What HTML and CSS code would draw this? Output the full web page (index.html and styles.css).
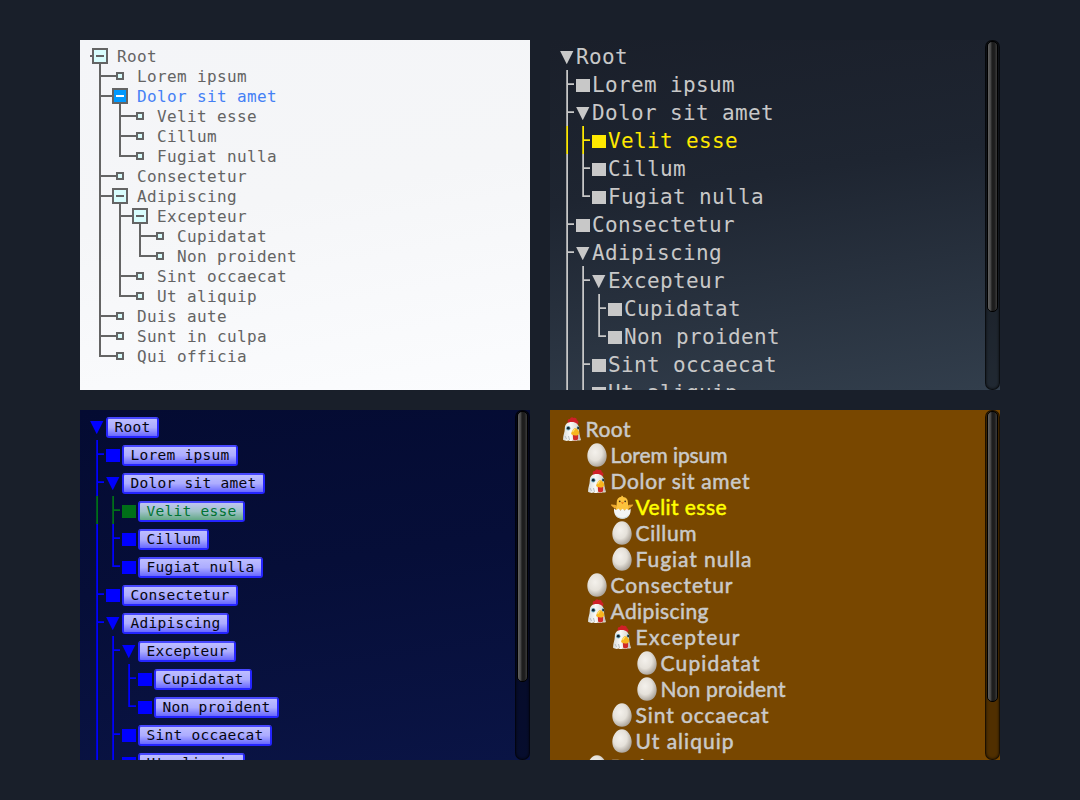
FILE: index.html
```html
<!DOCTYPE html>
<html lang="en">
<head>
<meta charset="utf-8">
<title>Tree themes</title>
<link rel="stylesheet" href="styles.css">
</head>
<body>
<svg class="defs" width="0" height="0" aria-hidden="true">
  <defs>
    <radialGradient id="shell" cx="0.4" cy="0.38" r="0.65">
      <stop offset="0" stop-color="#f4f1ec"/><stop offset="0.55" stop-color="#e5e1da"/><stop offset="1" stop-color="#aaa39a"/>
    </radialGradient>
    <linearGradient id="feather" x1="0" x2="1">
      <stop offset="0" stop-color="#d9dcda"/><stop offset="0.4" stop-color="#fafaf7"/><stop offset="1" stop-color="#cfccc4"/>
    </linearGradient>
    <symbol id="egg" viewBox="0 0 24 24">
      <path d="M12 .3C17.400.3 21.700 6.800 21.700 12.700c0 6.500-4 11-9.700 11s-9.700-4.500-9.700-11C2.300 6.800 6.600.3 12 .3z" fill="url(#shell)"/>
    </symbol>
    <symbol id="hen" viewBox="0 0 24 24">
      <path d="M8 6C7.200 3 8.300 1.400 10 2.200 10.200.2 12.400-.5 13.500 1c2-.7 3.700.6 3.200 2.300 1.700.1 2.100 1.700 1.300 3.700z" fill="#cf2027"/>
      <path d="M4.800 11.500C4.800 7 7.500 5 11.800 5s7.200 2.500 7.200 7c0 4 1 8 2 11-1.700 1-2.800.2-3.800.5-1.500.8-3 .4-4.500.3-1.500.5-3 .5-4-.3-1.800.7-3.700.4-5.500-.4-.6-3.600 1.600-7.300 1.600-11.600z" fill="url(#feather)"/>
      <path d="M5 19l1.500 3M8.500 19l1 4M19 18l.5 4" stroke="#b7bfc3" stroke-width="1" fill="none"/>
      <ellipse cx="8.300" cy="11.200" rx="2.200" ry="2.300" fill="#79b4c8"/><circle cx="8.300" cy="11.200" r="1.400" fill="#14232c"/>
      <ellipse cx="18" cy="11" rx="1.300" ry="2.100" fill="#79a9b8"/><circle cx="18.200" cy="11" r="1" fill="#14232c"/>
      <path d="M12.800 17.500h5.300v4.800c-1.400 1.500-3.800 1.500-5 .1z" fill="#cf2929"/>
      <path d="M14.500 11.300c2-.6 4.600 1.700 4.700 4.600-.5 2.500-3.200 2.900-5.200 2.300-1.800-.2-3.300-1-2.800-2 .6-1.600 1.700-4 3.300-4.900z" fill="#f7b51f"/>
      <path d="M12.700 15c.7-1.800 1.300-2.700 2.500-2.700" stroke="#ffe36e" stroke-width="1.200" fill="none"/>
    </symbol>
    <symbol id="chick" viewBox="0 0 24 24">
      <path d="M6.500 10.500C4.500 9.500 2.500 9.800.9 9.600c.2 1.800 1.700 2.200 2.300 2.400.3 1.300 1.700 1.600 3.600 1.700zM18 10.500c2-1 3.500-.700 5.200-.9-.3 1.800-1.500 2.200-2.200 2.500-.5 1.100-1.500 1.500-3.300 1.600z" fill="#eda92c"/>
      <path d="M11.500 1.800L11 .4l1.300.8.700-.8.100 1.500c3.200.3 5 2.500 4.800 5.500 0 2.700.8 4.300.8 7.600H6c0-3.300.8-4.900.7-7.600 0-3 1.700-5.200 4.800-5.600z" fill="#fcc33d"/>
      <circle cx="9.700" cy="6.300" r=".9" fill="#46301b"/><circle cx="15.200" cy="6.300" r=".9" fill="#46301b"/>
      <path d="M10.800 7.300h3.300l-1.600 2z" fill="#e87918"/>
      <path d="M4 13.500l2.300 1.600 2.100-1.500 2.100 2 2-1.800 2.200 1.800 2-1.900 2 1.500 1.900-1.700c.6 6.300-2.800 10.200-8.300 10.200S3.500 20 4 13.500z" fill="#f3f5f4"/>
      <path d="M5.200 18.500c1.500 3.500 5 4.500 8 4.200 2.500-.2 5-1.500 6.300-4.200-.9 3.600-3.500 5.200-7.200 5.200-3.500 0-6.200-1.800-7.100-5.200z" fill="#c6d7dc"/>
    </symbol>
  </defs>
</svg>
<main class="themes">
  <section class="panel light"><div class="tree" data-selected="2" data-rows="16"></div></section>
  <section class="panel slate"><div class="tree" data-selected="3" data-rows="13"></div><div class="scrollbar"><div class="thumb"></div></div></section>
  <section class="panel navy"><div class="tree" data-selected="3" data-rows="13"></div><div class="scrollbar"><div class="thumb"></div></div></section>
  <section class="panel farm"><div class="tree" data-selected="3" data-rows="14"></div><div class="scrollbar"><div class="thumb thumb-long"></div></div></section>
</main>
<script src="tree.js"></script>
</body>
</html>
```
FILE: styles.css
```css
* { box-sizing: border-box; }
body {
  margin: 0;
  background: #191f2a;
  font-family: "DejaVu Sans Mono", monospace;
}
.defs { position: absolute; }
.themes {
  display: grid;
  grid-template-columns: 450px 450px;
  grid-template-rows: 350px 350px;
  gap: 20px;
  padding: 40px 80px;
}
.panel { display: flex; overflow: hidden; }
.tree { flex: 1; overflow: hidden; }
.row { display: flex; white-space: pre; }
.cell { flex: none; }

/* light */
.light { background: linear-gradient(170deg, #f4f5f8 0%, #f5f6f8 45%, #fbfcfe 100%); color: #646464; }
.light .tree { padding: 6px 0 0 10px; font-size: 16px; letter-spacing: 0.37px; }
.light .row { height: 20px; line-height: 22px; }
.light .cell { width: 20px; height: 20px; background-repeat: no-repeat; --l: linear-gradient(#646464, #646464); }
.light .line { background-image: var(--l); background-size: 2px 20px; background-position: 9px 0; }
.light .tee { background-image: var(--l), var(--l); background-size: 2px 20px, 11px 2px; background-position: 9px 0, 9px 9px; }
.light .elbow { background-image: var(--l), var(--l); background-size: 2px 11px, 11px 2px; background-position: 9px 0, 9px 9px; }
.light .icon { display: grid; place-items: center; background-image: var(--l); background-size: 10px 2px; background-position: 0 9px; }
.light .open { background-image: var(--l), var(--l); background-size: 10px 2px, 2px 10px; background-position: 0 9px, 9px 10px; }
.light .mark { width: 8px; height: 8px; border: 2px solid #646464; background: #d8fdfd; }
.light .open .mark { width: 16px; height: 16px; display: grid; place-items: center; }
.light .open .mark::after { content: ""; width: 8px; height: 2px; background: #646464; }
.light .selected .label { color: #4480f5; }
.light .selected .mark { background: #0099ff; }
.light .selected .open .mark::after { background: #fff; }
.light .label { padding-left: 7px; }

/* slate and navy */
.slate { background: linear-gradient(172deg, #1a1f2a 0%, #1e2531 40%, #323e4c 100%); --ink: #c8c8c8; }
.navy { background: linear-gradient(172deg, #040b32 0%, #060e38 45%, #0a1445 100%); --ink: #0000ff; }
.slate .tree, .navy .tree { padding: 2px 0 0 10px; }
.slate .row, .navy .row { height: 28px; color: var(--ink); }
.slate .cell, .navy .cell {
  width: 16px;
  height: 28px;
  background-repeat: no-repeat;
  --soft: color-mix(in srgb, currentColor 75%, transparent);
  --v: linear-gradient(90deg, var(--soft) 50%, currentColor 50%);
  --h: linear-gradient(var(--soft) 50%, currentColor 50%);
}
.slate .line, .navy .line { background-image: var(--v); background-size: 2px 28px; background-position: 6px 0; }
.slate .tee, .navy .tee { background-image: var(--v), var(--h); background-size: 2px 28px, 6px 2px; background-position: 6px 0, 8px 13px; }
.slate .elbow, .navy .elbow { background-image: var(--v), var(--h); background-size: 2px 15px, 6px 2px; background-position: 6px 0, 8px 13px; }
.slate .mark, .navy .mark { width: 13.500px; height: 13.500px; margin: 8.700px 0 0; background: currentColor; }
.slate .open .mark, .navy .open .mark { clip-path: polygon(0 0, 100% 0, 50% 100%); }
.slate .label { font-size: 21px; letter-spacing: 0.360px; line-height: 30.500px; }
.slate .selected { color: #ffe900; }
.navy .selected { color: #006f18; }
.navy .label {
  height: 21px;
  margin: 4.500px 0 0 0.400px;
  padding: 0 6.500px 0 6px;
  border: 2px solid #2525ff;
  border-top-color: #4848ff;
  border-radius: 3px;
  background: linear-gradient(#bebeff 0%, #acacff 50%, #6868ff 100%);
  color: #050510;
  font-size: 14.500px;
  letter-spacing: 0.270px;
  line-height: 17px;
}
.navy .selected .label { color: #007333; background: linear-gradient(#bfc5f0 0%, #a0c2c8 50%, #62a884 100%); }

/* farm */
.farm { background: #784700; color: #cacaca; }
.farm .tree { padding: 6px 0 0 9px; }
.farm .row { height: 26px; }
.farm .cell { width: 25px; height: 26px; }
.farm .icon { display: grid; place-items: center; }
.farm .icon svg { width: 24px; height: 24px; }
.farm .label { height: 26px; overflow: visible; font: 400 21px/26px Lato, sans-serif; }
.farm .label text { fill: currentColor; stroke: currentColor; stroke-width: 0.5px; }
.farm .selected { color: #ffff00; }

/* scrollbar */
.scrollbar {
  flex: none;
  width: 15px;
  padding: 1px;
  border: 1px solid rgba(0, 0, 0, 0.650);
  border-radius: 7px;
  background: rgba(0, 0, 0, 0.330);
  box-shadow: inset 0 0 3px rgba(0, 0, 0, 0.700);
}
.thumb {
  height: 271px;
  margin: -1px 0 0;
  border: 1px solid #000;
  border-radius: 5px;
  background: linear-gradient(90deg, #626262 0%, #414141 35%, #1d1d1d 42%, #1d1d1d 70%, #3c3c3c 100%);
}
.thumb-long { height: 291px; }
```
FILE: tree.js
```js
// [depth, label, width of the label in the farm theme]
const nodes = [
  [0, "Root", 45],
  [1, "Lorem ipsum", 117],
  [1, "Dolor sit amet", 139],
  [2, "Velit esse", 91],
  [2, "Cillum", 61],
  [2, "Fugiat nulla", 116],
  [1, "Consectetur", 122],
  [1, "Adipiscing", 98],
  [2, "Excepteur", 104],
  [3, "Cupidatat", 99],
  [3, "Non proident", 125],
  [2, "Sint occaecat", 133],
  [2, "Ut aliquip", 98],
  [1, "Duis aute", 95],
  [1, "Sunt in culpa", 128],
  [1, "Qui officia", 105]
];

// True when the branch at the given depth goes on below row i.
function continues(i, depth) {
  for (let j = i + 1; j < nodes.length; j++) {
    if (nodes[j][0] < depth) return false;
    if (nodes[j][0] === depth) return true;
  }
  return false;
}

function row(i, selected, farm) {
  const [depth, text, width] = nodes[i];
  const open = i + 1 < nodes.length && nodes[i + 1][0] > depth;
  let html = "";
  for (let d = 1; d <= depth; d++) {
    const more = continues(i, d);
    const kind = farm ? "" : d === depth ? (more ? "tee" : "elbow") : more ? "line" : "";
    html += `<span class="cell ${kind}"></span>`;
  }
  if (farm) {
    const icon = i === selected ? "chick" : open ? "hen" : "egg";
    html += `<span class="cell icon"><svg><use href="#${icon}"/></svg></span>
      <svg class="label" width="${width + 4}"><text x="1.500" y="20.500" textLength="${width}">${text}</text></svg>`;
  } else {
    html += `<span class="cell icon ${open ? "open" : ""}"><span class="mark" style="display:${open ? "grid" : "block"}"></span></span><span class="label">${text}</span>`;
  }
  return `<div class="row ${i === selected ? "selected" : ""}">${html}</div>`;
}

document.querySelectorAll(".tree").forEach(tree => {
  const farm = tree.parentElement.classList.contains("farm");
  const selected = Number(tree.dataset.selected);
  const count = Number(tree.dataset.rows);
  tree.innerHTML = nodes.slice(0, count).map((_, i) => row(i, selected, farm)).join("");
});
```
